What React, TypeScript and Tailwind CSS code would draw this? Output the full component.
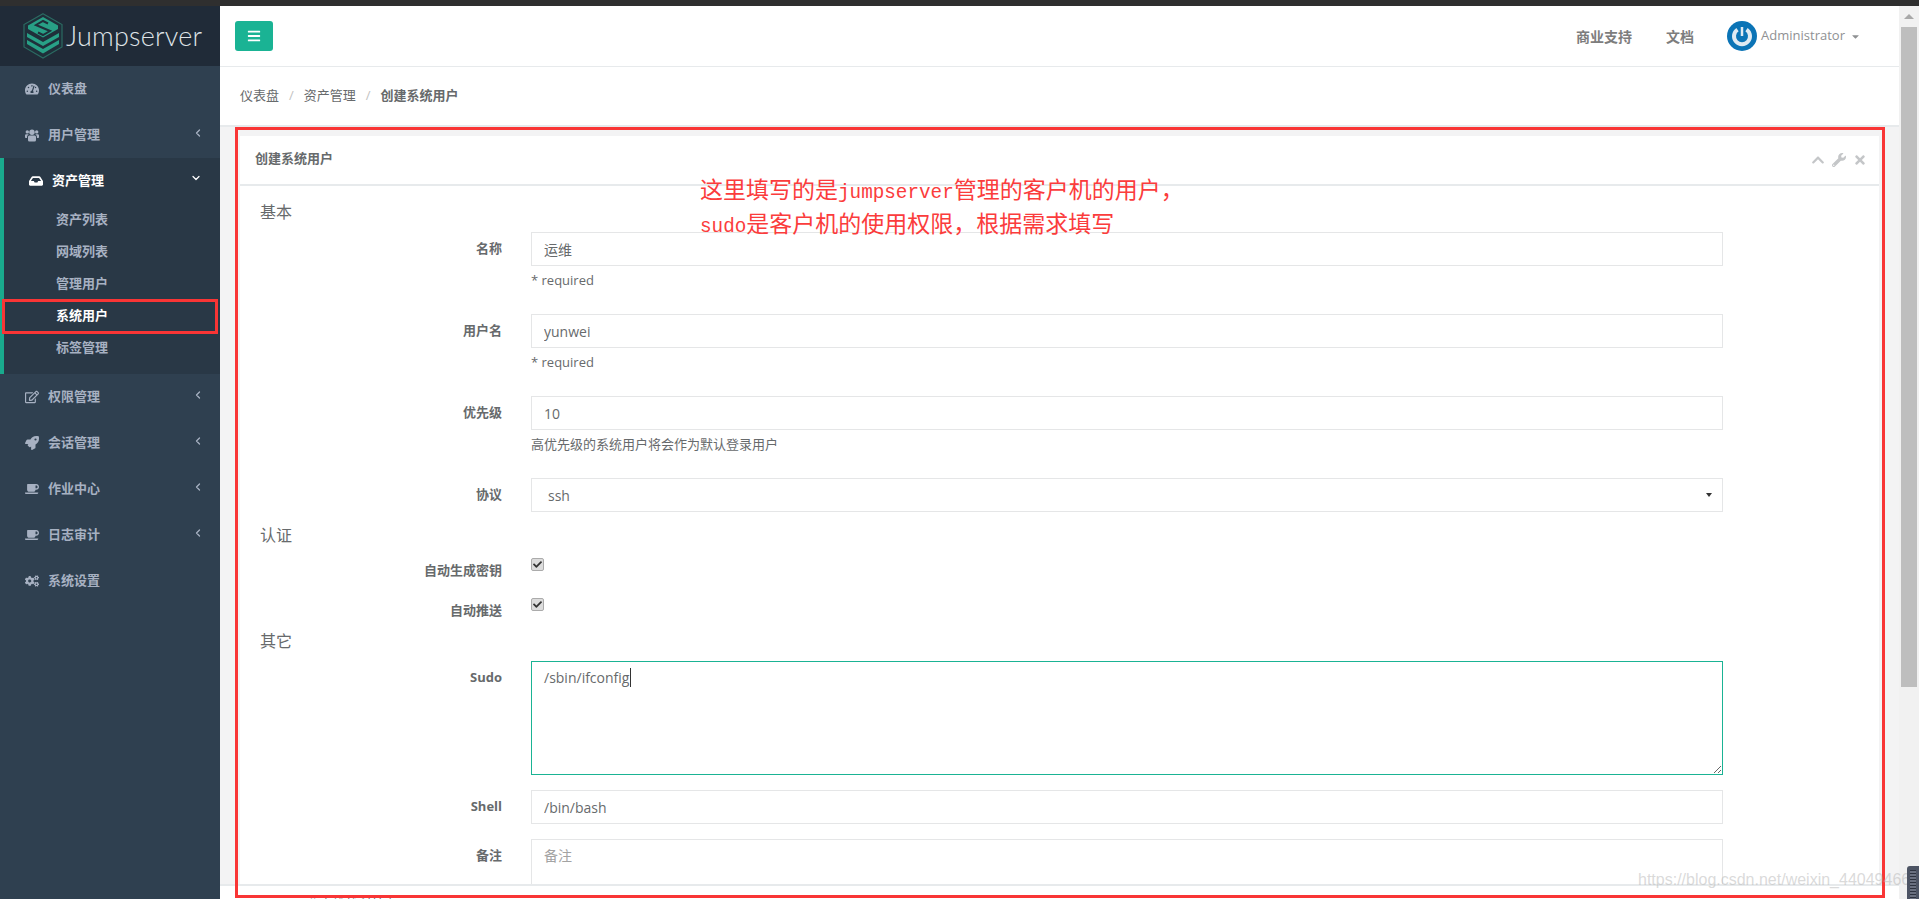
import { ReactNode } from "react";
import { ChevronDown, ChevronLeft } from "lucide-react";
import {
  FaBars,
  FaCaretDown,
  FaCheck,
  FaChevronUp,
  FaCoffee,
  FaCogs,
  FaInbox,
  FaRegEdit,
  FaRocket,
  FaTachometerAlt,
  FaTimes,
  FaWrench,
} from "react-icons/fa";

const subItems = ["资产列表", "网域列表", "管理用户", "系统用户", "标签管理"];

function UsersIcon() {
  return (
    <svg width="14" height="13" viewBox="0 0 14 13" fill="currentColor">
      <circle cx="7" cy="3.3" r="2.7" />
      <circle cx="2.3" cy="2.9" r="1.7" />
      <circle cx="11.7" cy="2.9" r="1.7" />
      <path d="M4.2 6.4 H9.8 Q11 6.4 11 8 V11 Q11 12.6 9.6 12.6 H4.4 Q3 12.6 3 11 V8 Q3 6.4 4.2 6.4 Z" />
      <path d="M0 6.6 Q0 5.2 1.2 5.2 H3.6 Q3.4 6 2.4 6.6 Q2 7.4 2 9 H0.8 Q0 9 0 8.2 Z" />
      <path d="M14 6.6 Q14 5.2 12.8 5.2 H10.4 Q10.6 6 11.6 6.6 Q12 7.4 12 9 H13.2 Q14 9 14 8.2 Z" />
    </svg>
  );
}

function NavItem({ icon, text, arrow = false }: { icon: ReactNode; text: string; arrow?: boolean }) {
  return (
    <div className="flex h-[46px] items-center pl-[25px] pr-[16px] text-[13px] font-semibold text-[#a7b1c2]">
      <span className="flex w-[23px] text-[14px]">{icon}</span>
      <span>{text}</span>
      {arrow && <ChevronLeft size={12} strokeWidth={2.5} className="ml-auto mb-[4px]" />}
    </div>
  );
}

function Logo() {
  return (
    <svg width="40" height="46" viewBox="0 0 40 46" className="shrink-0">
      <polygon points="20,0.8 39,11.5 39,34 20,45 1,34 1,11.5" fill="#1f2f3a" stroke="#2b6b62" strokeWidth="1.2" />
      <polygon points="20,4 35,12.5 35,16 20,24.5 5,16 5,12.5" fill="#28a086" />
      <polyline points="25,10.5 20,8 13,12 27,18 20,22 15,19.5" fill="none" stroke="#1f2f3a" strokeWidth="2" />
      <polygon points="4,20 20,29 36,20 36,24 20,33 4,24" fill="#28a086" />
      <polygon points="4,27 20,36 36,27 36,31 20,40.5 4,31" fill="#28a086" />
    </svg>
  );
}

function Sidebar() {
  return (
    <aside className="w-[220px] shrink-0 bg-[#2f4050]">
      <div className="flex h-[60px] items-center gap-[3px] bg-[#202b38] pl-[23px]">
        <Logo />
        <span className="pt-[1px] [font-family:Lato,sans-serif] text-[27px] font-light tracking-[0.2px] text-[#dfe3e7]">
          Jumpserver
        </span>
      </div>
      <NavItem icon={<FaTachometerAlt />} text="仪表盘" />
      <NavItem icon={<UsersIcon />} text="用户管理" arrow />
      <div className="h-[216px] border-l-4 border-[#19aa8d] bg-[#293846]">
        <div className="flex h-[46px] items-center pl-[25px] pr-[18px] text-[13px] font-semibold text-white">
          <span className="flex w-[23px] text-[14px]">
            <FaInbox />
          </span>
          <span>资产管理</span>
          <ChevronDown size={12} strokeWidth={2.5} className="ml-auto mb-[6px]" />
        </div>
        {subItems.map((item) => (
          <div
            key={item}
            className={`flex h-[32px] items-center pl-[52px] text-[13px] font-semibold ${
              item === "系统用户" ? "text-white" : "text-[#a7b1c2]"
            }`}
          >
            {item}
          </div>
        ))}
      </div>
      <NavItem icon={<FaRegEdit />} text="权限管理" arrow />
      <NavItem icon={<FaRocket />} text="会话管理" arrow />
      <NavItem icon={<FaCoffee />} text="作业中心" arrow />
      <NavItem icon={<FaCoffee />} text="日志审计" arrow />
      <NavItem icon={<FaCogs />} text="系统设置" />
    </aside>
  );
}

function TopBar() {
  return (
    <div className="flex h-[61px] shrink-0 items-center border-b border-[#e7eaec] bg-white pl-[15px] pr-[38px]">
      <button className="mb-[1px] flex h-[30px] w-[38px] items-center justify-center rounded-[3px] bg-[#1ab394] text-[14px] text-white">
        <FaBars />
      </button>
      <span className="ml-auto text-[14px] font-semibold text-[#7d7d7d]">商业支持</span>
      <span className="ml-[34px] text-[14px] font-semibold text-[#7d7d7d]">文档</span>
      <svg width="30" height="30" viewBox="0 0 30 30" className="ml-[33px]">
        <circle cx="15" cy="15" r="15" fill="#0b74b6" />
        <path d="M10.5 8.6 A8 8 0 1 0 19.5 8.6" fill="none" stroke="#dfeaf2" strokeWidth="4" />
        <path d="M15 6 V15" stroke="#dfeaf2" strokeWidth="2.5" />
      </svg>
      <span className="ml-[4px] text-[13px] text-[#8f9193]">Administrator</span>
      <FaCaretDown className="ml-[5px] text-[11px] text-[#8f9193]" />
    </div>
  );
}

function Breadcrumb() {
  return (
    <div className="flex h-[60px] shrink-0 items-center border-b-2 border-[#e7eaec] bg-white pl-[20px] text-[13px] text-[#676a6c]">
      <span>仪表盘</span>
      <span className="mx-[10px] text-[#c2c2c2]">/</span>
      <span>资产管理</span>
      <span className="mx-[10px] text-[#c2c2c2]">/</span>
      <span className="font-bold">创建系统用户</span>
    </div>
  );
}

function Heading({ text, top }: { text: string; top: string }) {
  return <h3 className={`h-[24px] text-[16px] leading-[24px] text-[#676a6c] ${top}`}>{text}</h3>;
}

function Row({ label, top, children, labelTop = "pt-[6px]" }: { label: string; top: string; children: ReactNode; labelTop?: string }) {
  return (
    <div className={`grid grid-cols-[242px_1192px] gap-x-[29px] ${top}`}>
      <label className={`text-right text-[13px] font-bold leading-[20px] text-[#676a6c] ${labelTop}`}>{label}</label>
      <div>{children}</div>
    </div>
  );
}

const inputClass =
  "block h-[34px] w-full border border-[#e5e6e7] bg-white px-[12px] text-[14px] text-[#676a6c] outline-none";

function Help({ text }: { text: string }) {
  return <p className="mt-[5px] h-[18px] text-[13px] leading-[18px] text-[#676a6c]">{text}</p>;
}

function Check() {
  return (
    <span className="relative block h-[13px] w-[13px]">
      <input
        type="checkbox"
        readOnly
        checked
        className="m-0 block h-[13px] w-[13px] appearance-none rounded-[2px] border border-[#ababab] bg-[#dcdcdc]"
      />
      <FaCheck className="absolute left-[2px] top-[2px] text-[9px] text-[#333]" />
    </span>
  );
}

function Form() {
  return (
    <div className="px-[20px]">
      <Heading text="基本" top="mt-[14px]" />
      <Row label="名称" top="mt-[8px]">
        <input readOnly value="运维" className={inputClass} />
        <Help text="* required" />
      </Row>
      <Row label="用户名" top="mt-[25px]">
        <input readOnly value="yunwei" className={inputClass} />
        <Help text="* required" />
      </Row>
      <Row label="优先级" top="mt-[25px]">
        <input readOnly value="10" className={inputClass} />
        <Help text="高优先级的系统用户将会作为默认登录用户" />
      </Row>
      <Row label="协议" top="mt-[25px]">
        <div className="relative">
          <select className="block h-[34px] w-full appearance-none border border-[#e5e6e7] bg-white pl-[16px] pr-[12px] text-[14px] text-[#676a6c] outline-none">
            <option>ssh</option>
          </select>
          <svg width="6" height="4" viewBox="0 0 6 4" className="absolute right-[11px] top-[15px]">
            <polygon points="0,0 6,0 3,4" fill="#333" />
          </svg>
        </div>
      </Row>
      <Heading text="认证" top="mt-[11px]" />
      <Row label="自动生成密钥" top="mt-[11px] h-[20px]" labelTop="pt-[2px]">
        <Check />
      </Row>
      <Row label="自动推送" top="mt-[20px] h-[20px]" labelTop="pt-[2px]">
        <Check />
      </Row>
      <Heading text="其它" top="mt-[11px]" />
      <Row label="Sudo" top="mt-[8px]">
        <div className="relative">
          <textarea
            readOnly
            value="/sbin/ifconfig"
            className="block h-[114px] w-full border border-[#1ab394] bg-white px-[12px] py-[6px] text-[14px] leading-[20px] text-[#676a6c] outline-none"
          />
          <span className="absolute left-[99px] top-[7px] h-[19px] w-px bg-[#333]" />
        </div>
      </Row>
      <Row label="Shell" top="mt-[15px]">
        <input readOnly value="/bin/bash" className={inputClass} />
      </Row>
      <Row label="备注" top="mt-[15px]">
        <textarea
          readOnly
          placeholder="备注"
          className="block h-[64px] w-full resize-none border border-[#e5e6e7] bg-white px-[12px] py-[6px] text-[14px] leading-[20px] text-[#676a6c] outline-none placeholder:text-[#a3a3a3]"
        />
      </Row>
    </div>
  );
}

function Panel() {
  return (
    <div className="h-full bg-white">
      <div className="flex h-[50px] items-center border-b-2 border-[#e7eaec] pl-[15px] pr-[12px]">
        <span className="mb-[2px] text-[13px] font-bold text-[#676a6c]">创建系统用户</span>
        <div className="ml-auto flex items-center gap-[7px] text-[14px] text-[#c4c6c8]">
          <FaChevronUp />
          <FaWrench />
          <FaTimes />
        </div>
      </div>
      <Form />
    </div>
  );
}

function Scrollbar() {
  return (
    <div className="w-[20px] shrink-0 bg-[#f1f1f1]">
      <svg width="20" height="21" viewBox="0 0 20 21" className="block">
        <polygon points="10,8 15,13 5,13" fill="#a8a8a8" />
      </svg>
      <div className="mx-[2px] h-[660px] bg-[#bebebe]" />
    </div>
  );
}

export default function App() {
  return (
    <div className="relative flex h-[899px] w-full flex-col overflow-hidden text-[13px] text-[#676a6c] [font-family:'Open_Sans','Noto_Sans_CJK_SC',sans-serif]">
      <div className="h-[6px] shrink-0 bg-[#2f2f2f]" />
      <div className="flex min-h-0 flex-1">
        <Sidebar />
        <main className="flex min-w-0 flex-1 flex-col bg-[#f3f3f4]">
          <TopBar />
          <Breadcrumb />
          <div className="min-h-0 flex-1 overflow-hidden px-[20px] pt-[9px]">
            <Panel />
          </div>
          <footer className="h-[15px] shrink-0 overflow-hidden border-t-2 border-[#e7eaec] bg-white pl-[20px] pt-[8px] text-[13px] leading-[20px] text-[#676a6c]">
            <strong>Copyright</strong> 北京堆栈科技有限公司 © 2014-2018
          </footer>
        </main>
        <Scrollbar />
      </div>

      {/* annotations drawn over the screenshot */}
      <div className="pointer-events-none absolute left-[2px] top-[299px] h-[35px] w-[216px] border-[3px] border-[#f93535]" />
      <div className="pointer-events-none absolute left-[235px] top-[127px] h-[771px] w-[1650px] border-[3px] border-[#f93535]" />
      <div className="pointer-events-none absolute left-[700px] top-[174px] text-[23px] leading-[30px] text-[#fb3c3c]">
        <div>
          这里填写的是<span className="text-[19.3px] [font-family:'Liberation_Mono',monospace]">jumpserver</span>
          管理的客户机的用户，
        </div>
        <div>
          <span className="text-[19.3px] [font-family:'Liberation_Mono',monospace]">sudo</span>
          是客户机的使用权限，根据需求填写
        </div>
      </div>
      <div className="pointer-events-none absolute left-[1638px] top-[869px] text-[16px] leading-[22px] text-[#b5b5b5]/50 [font-family:'Liberation_Sans',sans-serif]">
        https://blog.csdn.net/weixin_44049466
      </div>
      <div className="absolute left-[1907px] top-[866px] flex h-[33px] w-[12px] justify-center rounded-tl-[3px] bg-[#4d5464] pt-[4px]">
        <div className="h-full w-[6px] bg-[repeating-linear-gradient(#2e3340_0,#2e3340_1px,#6a7080_1px,#6a7080_3px)]" />
      </div>
    </div>
  );
}
